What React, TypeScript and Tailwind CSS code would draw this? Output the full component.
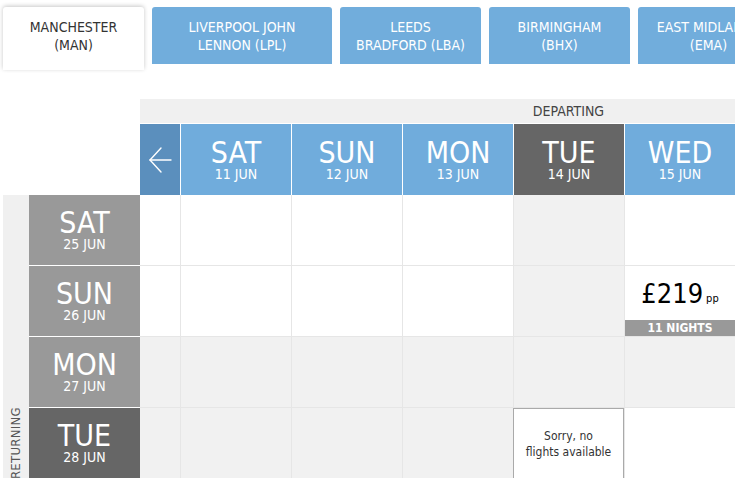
import React from "react";

const FONT = "font-['DejaVu_Sans_Condensed','DejaVu_Sans',sans-serif] font-stretch-condensed";

type Tab = { lines: [string, string]; w: string; active?: boolean };

const tabs: Tab[] = [
  { lines: ["MANCHESTER", "(MAN)"], w: "w-[141px]", active: true },
  { lines: ["LIVERPOOL JOHN", "LENNON (LPL)"], w: "w-[180px]" },
  { lines: ["LEEDS", "BRADFORD (LBA)"], w: "w-[141px]" },
  { lines: ["BIRMINGHAM", "(BHX)"], w: "w-[141px]" },
  { lines: ["EAST MIDLANDS", "(EMA)"], w: "w-[141px]" },
];

const outDays = [
  { d: "SAT", n: "11 JUN" },
  { d: "SUN", n: "12 JUN" },
  { d: "MON", n: "13 JUN" },
  { d: "TUE", n: "14 JUN", sel: true },
  { d: "WED", n: "15 JUN" },
  { d: "THU", n: "16 JUN" },
  { d: "FRI", n: "17 JUN" },
];

type Cell = "w" | "g" | "price" | "none";

const backDays: { d: string; n: string; sel?: boolean; lead: "w" | "g"; cells: Cell[] }[] = [
  { d: "SAT", n: "25 JUN", lead: "w", cells: ["w", "w", "w", "g", "w", "w", "w"] },
  { d: "SUN", n: "26 JUN", lead: "w", cells: ["w", "w", "w", "g", "price", "w", "w"] },
  { d: "MON", n: "27 JUN", lead: "g", cells: ["g", "g", "g", "g", "g", "g", "g"] },
  { d: "TUE", n: "28 JUN", sel: true, lead: "g", cells: ["g", "g", "g", "none", "w", "w", "w"] },
  { d: "WED", n: "29 JUN", lead: "w", cells: ["w", "w", "w", "g", "w", "w", "w"] },
  { d: "THU", n: "30 JUN", lead: "w", cells: ["w", "w", "w", "g", "w", "w", "w"] },
  { d: "FRI", n: "1 JUL", lead: "w", cells: ["w", "w", "w", "g", "w", "w", "w"] },
];

function DayLabel({ d, n }: { d: string; n: string }) {
  return (
    <div className="flex flex-col items-center text-white">
      <span className="text-[30px] leading-[29px]">{d}</span>
      <span className="text-[14px] leading-[15px] font-medium">{n}</span>
    </div>
  );
}

function BackArrow() {
  return (
    <svg width="26" height="28" viewBox="0 0 26 28" fill="none" stroke="white" strokeWidth="1.4" strokeLinecap="round">
      <path d="M3 14 H24" />
      <path d="M14 2 L3 14 L14 26" />
    </svg>
  );
}

function BodyCell({ kind }: { kind: Cell }) {
  if (kind === "none") {
    return (
      <div className="w-[111px] shrink-0 bg-white border border-[#aaaaaa] flex items-center justify-center">
        <p className="text-[12px] leading-[16px] text-[#333] text-center">
          Sorry, no
          <br />
          flights available
        </p>
      </div>
    );
  }
  if (kind === "price") {
    return (
      <div className="w-[111px] shrink-0 bg-white border-l border-b border-[#e6e6e6] flex flex-col">
        <div className="flex-1 flex items-center justify-center text-black">
          <span className="text-[27px] leading-none">£219</span>
          <span className="text-[11px] leading-none ml-[3px] mt-[10px]">pp</span>
        </div>
        <div className="h-[16px] bg-[#999999] text-white text-[12px] font-bold leading-[16px] text-center">
          11 NIGHTS
        </div>
      </div>
    );
  }
  return (
    <div
      className={
        "w-[111px] shrink-0 border-l border-b border-[#e6e6e6] " +
        (kind === "g" ? "bg-[#f1f1f1]" : "bg-white")
      }
    />
  );
}

export default function App() {
  return (
    <div className={"w-[735px] h-[478px] overflow-hidden bg-white " + FONT}>
      {/* airport tabs */}
      <div className="flex gap-2 pl-[3px] pt-[7px] h-[99px] items-start">
        {tabs.map((t) => (
          <div
            key={t.lines[0]}
            className={
              t.w +
              " shrink-0 rounded-t-[3px] flex flex-col items-center justify-center text-[14px] leading-[18px] " +
              (t.active
                ? "h-[63px] pb-[6px] bg-white text-[#333] shadow-[0_-1px_4px_rgba(0,0,0,0.22)]"
                : "h-[57px] bg-[#71addc] text-white")
            }
          >
            <span>{t.lines[0]}</span>
            <span>{t.lines[1]}</span>
          </div>
        ))}
      </div>

      {/* departing header */}
      <div className="flex">
        <div className="w-[140px] shrink-0" />
        <div className="flex flex-col">
          <div className="h-[24px] w-[857px] bg-[#f0f0f0] flex items-center justify-center text-[14px] text-[#444]">
            DEPARTING
          </div>
          <div className="h-[71px] mt-[1px] flex">
            <div className="w-[40px] shrink-0 bg-[#5b8fbd] flex items-center justify-center">
              <BackArrow />
            </div>
            {outDays.map((o) => (
              <div
                key={o.d}
                className={
                  "w-[111px] shrink-0 border-l border-white flex items-center justify-center " +
                  (o.sel ? "bg-[#666666]" : "bg-[#70acdc]")
                }
              >
                <DayLabel d={o.d} n={o.n} />
              </div>
            ))}
            <div className="w-[40px] shrink-0 border-l border-white bg-[#5b8fbd]" />
          </div>
        </div>
      </div>

      {/* returning rows */}
      <div className="flex">
        <div className="w-[3px] shrink-0" />
        <div className="w-[26px] shrink-0 bg-[#f0f0f0] flex items-center justify-center">
          <span className="[writing-mode:vertical-rl] rotate-180 text-[13px] text-[#555] tracking-[0.3px]">
            RETURNING
          </span>
        </div>
        <div className="flex flex-col">
          {backDays.map((r) => (
            <div key={r.d} className="h-[71px] flex">
              <div
                className={
                  "w-[111px] shrink-0 border-b border-white flex items-center justify-center " +
                  (r.sel ? "bg-[#666666]" : "bg-[#999999]")
                }
              >
                <DayLabel d={r.d} n={r.n} />
              </div>
              <div
                className={
                  "w-[40px] shrink-0 border-b border-[#e6e6e6] " +
                  (r.lead === "g" ? "bg-[#f1f1f1]" : "bg-white")
                }
              />
              {r.cells.map((c, i) => (
                <BodyCell key={i} kind={c} />
              ))}
            </div>
          ))}
        </div>
      </div>
    </div>
  );
}
